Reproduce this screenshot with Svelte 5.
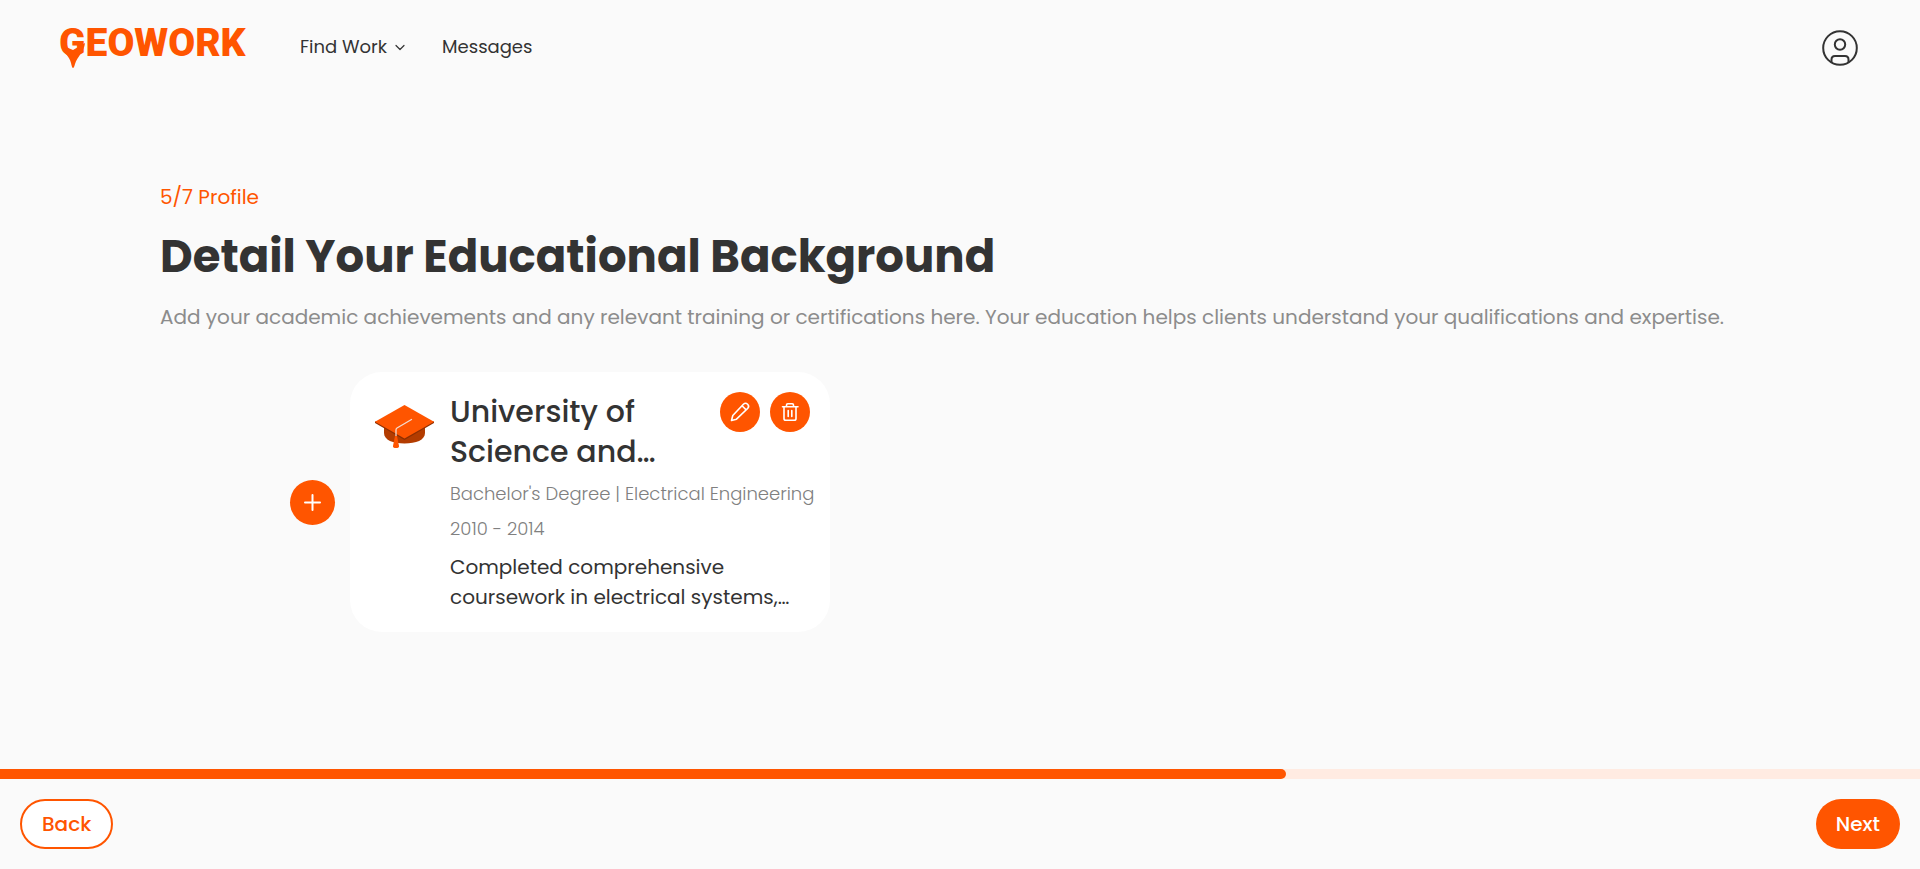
<script>
  const step = 5;
  const totalSteps = 7;
  const progress = 67;

  const schools = [
    {
      name: 'University of Science and…',
      degree: "Bachelor's Degree | Electrical Engineering",
      years: '2010 - 2014',
      description: 'Completed comprehensive coursework in electrical systems,…'
    }
  ];
</script>

<div class="page">
  <header>
    <a class="logo" href="/" aria-label="Geowork">
      <svg width="190" height="60" viewBox="0 0 190 60" aria-hidden="true">
        <path class="pin" d="M1 27 C3 35 9 37 11 45 Q12 50 13 50 Q14 50 15 46 C17 39 24 34 25 25 L13 32Z" />
        <text x="-1" y="38">GEOWORK</text>
      </svg>
    </a>
    <nav>
      <button class="nav-item" type="button">
        Find Work
        <svg width="12" height="12" viewBox="0 0 12 12" aria-hidden="true">
          <path d="M2 4.500l4 4 4-4" fill="none" stroke="currentColor" stroke-width="1.200" stroke-linecap="round" stroke-linejoin="round" />
        </svg>
      </button>
      <a class="nav-item" href="/messages">Messages</a>
    </nav>
    <button class="account" type="button" aria-label="Account">
      <svg width="40" height="40" viewBox="0 0 40 40" fill="none" stroke="currentColor" stroke-width="2" aria-hidden="true">
        <circle cx="20" cy="20" r="16.800" />
        <circle cx="20" cy="16.500" r="5.200" />
        <path d="M11.500 34v-2.500q0-3.500 3.500-3.500h10q3.500 0 3.500 3.500V34" />
      </svg>
    </button>
  </header>

  <main>
    <p class="step">{step}/{totalSteps} Profile</p>
    <h1>Detail Your Educational Background</h1>
    <p class="intro">
      Add your academic achievements and any relevant training or certifications here. Your education
      helps clients understand your qualifications and expertise.
    </p>

    <section class="schools">
      <button class="round add" type="button" aria-label="Add education">
        <svg width="21" height="21" viewBox="0 0 21 21" aria-hidden="true">
          <path d="M10.500 3v15M3 10.500h15" stroke="currentColor" stroke-width="2" stroke-linecap="round" />
        </svg>
      </button>
      {#each schools as school}
        <article>
          <svg class="cap" width="60" height="60" viewBox="0 0 60 60" aria-hidden="true">
            <path d="M10 25v13c0 7 9 10.500 20.500 10.500S51 45 51 38V25z" fill="#b33c00" />
            <path d="M1 26.500v1.500l29.500 17L60 28v-1.500z" fill="#8f2f00" />
            <path d="M30.500 10L60 26.700 30.500 43.500 1 26.700z" fill="#ff5500" />
            <path d="M37.500 24.500L23 33q-1 .600-1 2v8" fill="none" stroke="#f3dcd0" stroke-width="1.300" stroke-linecap="round" />
            <path d="M21 41h2l2 10q.3 2-3 2t-3-2z" fill="#ff5500" />
          </svg>
          <div class="details">
            <div class="top">
              <h2>{school.name}</h2>
              <div class="actions">
                <button class="round" type="button" aria-label="Edit education">
                  <svg width="20" height="20" viewBox="0 0 20 20" fill="none" stroke="currentColor" stroke-width="1.600" stroke-linejoin="round" aria-hidden="true">
                    <path d="M1.500 18.500L2.800 13.500 13.400 2.300a2.900 2.900 0 0 1 4.200 4.200L6.500 17.200z" />
                    <path d="M12 3.800L16.200 7.900" />
                  </svg>
                </button>
                <button class="round" type="button" aria-label="Delete education">
                  <svg width="20" height="20" viewBox="0 0 20 20" fill="none" stroke="currentColor" stroke-width="1.600" stroke-linecap="round" stroke-linejoin="round" aria-hidden="true">
                    <path d="M2.500 4.700h15.500M6.500 4.500V2.900q0-1.200 1.200-1.200h4.600q1.200 0 1.200 1.200v1.600" />
                    <path d="M4 4.700v11.800q0 1.800 1.800 1.800h8.400q1.800 0 1.800-1.800V4.700M8.200 8.500v6M11.800 8.500v6" />
                  </svg>
                </button>
              </div>
            </div>
            <p class="meta">{school.degree}</p>
            <p class="meta">{school.years}</p>
            <p class="description">{school.description}</p>
          </div>
        </article>
      {/each}
    </section>
  </main>

  <footer>
    <div class="track" role="progressbar" aria-label="Profile progress" aria-valuenow={progress} aria-valuemin="0" aria-valuemax="100">
      <div class="fill" style="width: {progress}%"></div>
    </div>
    <div class="steps">
      <button class="pill back" type="button">Back</button>
      <button class="pill next" type="button">Next</button>
    </div>
  </footer>
</div>

<style>
  :global(body) {
    margin: 0;
    background: #fafafa;
  }

  .page {
    display: flex;
    flex-direction: column;
    min-height: 100vh;
    color: #333;
    font-family: Poppins, Inter, sans-serif;
  }

  .page :is(h1, h2, p) {
    margin: 0;
  }

  button {
    padding: 0;
    border: 0;
    background: none;
    color: inherit;
    font: inherit;
    cursor: pointer;
  }

  svg {
    display: block;
    flex: none;
    overflow: visible;
  }

  header {
    display: flex;
    align-items: center;
    height: 96px;
    padding: 0 60px;
  }

  .logo text {
    fill: #ff5500;
    font-family: Roboto, sans-serif;
    font-size: 39px;
    font-weight: 900;
  }

  .pin {
    fill: #ff5500;
  }

  nav {
    display: flex;
    gap: 36px;
    margin-left: 50px;
    padding-bottom: 2px;
  }

  .nav-item {
    display: flex;
    align-items: center;
    gap: 7px;
    color: inherit;
    font-size: 18px;
    line-height: 28px;
    text-decoration: none;
  }

  .account {
    margin-left: auto;
  }

  main {
    flex: 1;
    padding: 86px 160px 40px;
  }

  .step,
  .intro,
  .description {
    font-size: 20px;
    line-height: 30px;
  }

  .step {
    color: #ff5500;
  }

  h1 {
    padding: 9px 0;
    font-size: 45px;
    font-weight: 700;
    line-height: 72px;
  }

  .intro {
    color: #8c8c8c;
  }

  .schools {
    display: flex;
    align-items: center;
    gap: 15px;
    padding: 40px 130px;
  }

  .round {
    display: flex;
    align-items: center;
    justify-content: center;
    flex: none;
    width: 40px;
    height: 40px;
    border-radius: 50%;
    background: #ff5500;
    color: #fff;
  }

  .add {
    width: 45px;
    height: 45px;
  }

  article {
    display: flex;
    gap: 16px;
    box-sizing: border-box;
    width: 480px;
    padding: 20px 20px 20px 24px;
    border-radius: 32px;
    background: #fff;
  }

  .cap {
    margin-top: 3px;
  }

  .details {
    flex: 1;
    min-width: 0;
  }

  .top {
    display: flex;
    align-items: flex-start;
    justify-content: space-between;
    gap: 20px;
  }

  h2 {
    font-size: 30px;
    font-weight: 500;
    line-height: 40px;
  }

  .actions {
    display: flex;
    gap: 10px;
  }

  .meta {
    padding-top: 8px;
    color: #808080;
    font-size: 18px;
    font-weight: 300;
    line-height: 27px;
    white-space: nowrap;
  }

  .description {
    padding-top: 10px;
  }

  .track {
    background: #ffebe2;
  }

  .fill {
    height: 10px;
    border-radius: 0 5px 5px 0;
    background: #ff5500;
  }

  .steps {
    display: flex;
    justify-content: space-between;
    padding: 20px;
  }

  .pill {
    height: 50px;
    padding: 0 20px;
    border-radius: 25px;
    font-size: 20px;
    font-weight: 500;
  }

  .back {
    border: 2px solid #ff5500;
    background: #fff;
    color: #ff5500;
  }

  .next {
    background: #ff5500;
    color: #fff;
  }
</style>
